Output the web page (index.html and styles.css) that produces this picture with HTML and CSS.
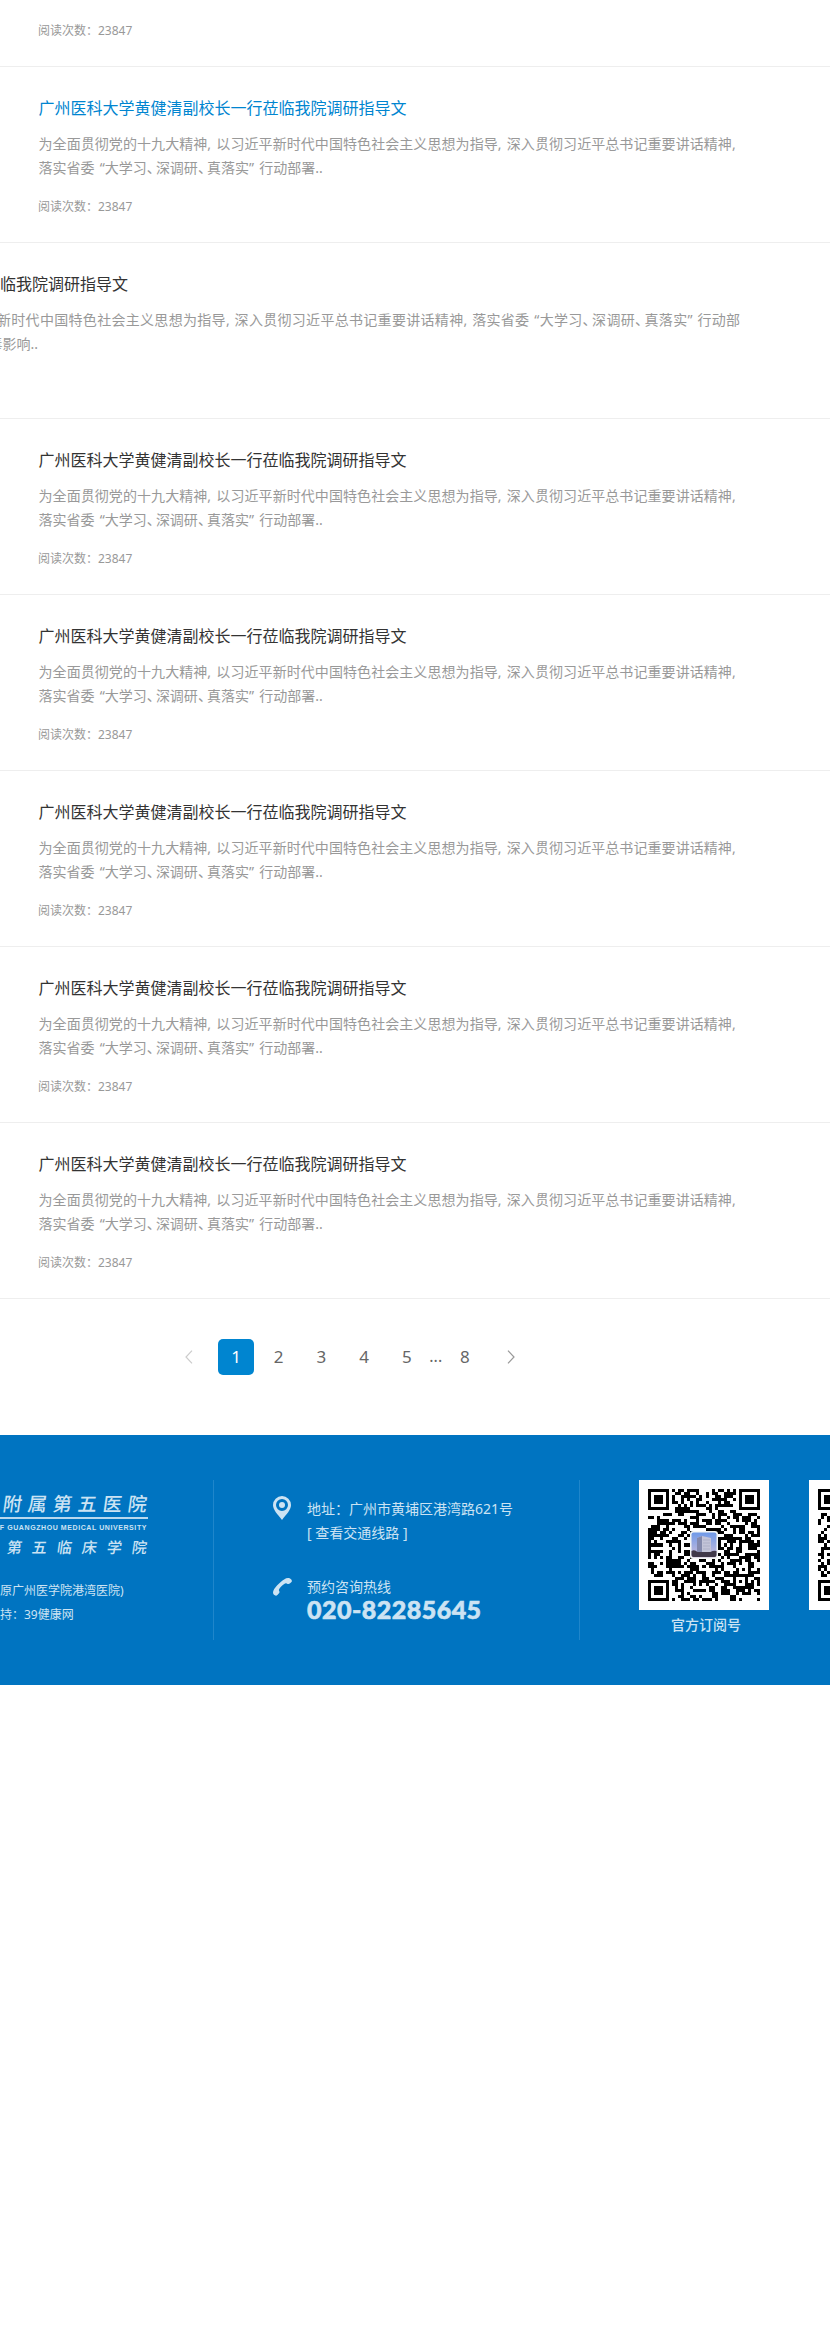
FILE: index.html
```html
<!DOCTYPE html>
<html lang="zh-CN">
<head>
<meta charset="utf-8">
<title>医院新闻</title>
<link rel="stylesheet" href="styles.css">
</head>
<body>
<main class="news" id="news">
  <article class="item item--first"><p class="reads">阅读次数&#xFF1A;23847</p></article>
</main>

<nav class="pager">
  <a class="pager__arrow pager__arrow--off"><svg width="8" height="14" viewBox="0 0 8 14"><path d="M7 .7 1 7l6 6.300"/></svg></a>
  <a class="pager__page pager__page--on">1</a>
  <a class="pager__page">2</a>
  <a class="pager__page">3</a>
  <a class="pager__page">4</a>
  <a class="pager__page">5</a>
  <span class="pager__dots">...</span>
  <a class="pager__page">8</a>
  <a class="pager__arrow"><svg width="8" height="14" viewBox="0 0 8 14"><path d="m1 .7 6 6.300-6 6.300"/></svg></a>
</nav>

<footer class="footer">
  <section class="brand">
    <div class="brand__name"><span>附</span><span>属</span><span>第</span><span>五</span><span>医</span><span>院</span></div>
    <div class="brand__en">F GUANGZHOU MEDICAL UNIVERSITY</div>
    <div class="brand__sub"><span>第</span><span>五</span><span>临</span><span>床</span><span>学</span><span>院</span></div>
    <p class="brand__old">原广州医学院港湾医院)</p>
    <p class="brand__tech">持&#xFF1A;39健康网</p>
  </section>
  <section class="contact">
    <div class="contact__row">
      <svg class="contact__pin" width="18" height="24" viewBox="0 0 18 24"><path fill-rule="evenodd" d="M9 0a9 9 0 0 1 9 9c0 5-4.500 9-9 15C4.500 18 0 14 0 9a9 9 0 0 1 9-9Zm0 3a6 6 0 1 0 0 12A6 6 0 0 0 9 3Z"/><circle cx="9" cy="9" r="3"/></svg>
      <div class="contact__text">地址&#xFF1A;广州市黄埔区港湾路621号<br>[ 查看交通线路 ]</div>
    </div>
    <div class="contact__row contact__row--tel">
      <svg class="contact__phone" width="19" height="18" viewBox="0 0 19 18"><path d="M11.500 1.200C13 0 15.500-.3 17 .5c1 .5 1.800 1.600 1.900 2.600.1.700-2.700 3-3.700 3-.9 0-1.300-1-2.200-.9-2.500.5-6.500 4.600-7.100 6.600-.2 1 .8 1.500.6 2.500-.2 1-2.700 3.700-3.600 3.500C1.500 17.400 0 16.300 0 14.500 0 10.500 7.500 3.500 11.500 1.200Z"/></svg>
      <div class="contact__text"><div class="contact__label">预约咨询热线</div><div class="contact__tel">020-82285645</div></div>
    </div>
  </section>
  <section class="codes">
    <figure class="code"><svg class="code__qr" data-seed="7" width="130" height="130" viewBox="0 0 130 130"></svg><figcaption>官方订阅号</figcaption></figure>
    <figure class="code"><svg class="code__qr" data-seed="31" width="130" height="130" viewBox="0 0 130 130"></svg></figure>
  </section>
</footer>
<script src="main.js"></script>
</body>
</html>
```
FILE: styles.css
```css
* { box-sizing: border-box; }
body, p, h2, figure { margin: 0; }
body {
  background: #fff;
  color: #333;
  font-family: "Noto Sans", "Noto Sans CJK SC", sans-serif;
  overflow-x: hidden;
}
.news { overflow: hidden; }
.item {
  height: 176px;
  padding: 29px 0 0 38.500px;
  border-bottom: 1px solid #eee;
}
.item--first { height: 67px; padding-top: 22px; }
.item h2 { font-size: 16px; line-height: 24px; font-weight: 400; white-space: nowrap; }
.item--active h2 { color: #0085d0; }
.item__text {
  margin-top: 12px;
  color: #999;
  font-size: 14px;
  line-height: 24px;
  white-space: nowrap;
  word-spacing: 1.500px;
}
.item__text--lead { letter-spacing: .07px; }
.mark { letter-spacing: -4.800px; }
.reads { margin: 18px 0 0 -.5px; color: #999; font-size: 12px; line-height: 18px; }
.item--first .reads { margin-top: 0; }
.item--wide { padding-left: 0; }
.item--wide .line { display: block; width: 743px; margin-left: -3px; white-space: normal; text-align: justify; text-align-last: justify; word-spacing: 1px; }
.item--wide .line--end { width: 50px; margin-left: -12px; text-align: right; text-align-last: right; white-space: nowrap; }

.pager { display: flex; align-items: center; height: 136px; padding: 0 0 20px 171px; }
.pager__arrow { width: 36px; display: flex; justify-content: center; margin-right: 11px; }
.pager__arrow svg { fill: none; stroke: #999; stroke-width: 1.200; }
.pager__arrow--off svg { stroke: #ccc; }
.pager__page {
  width: 36px; height: 36px; margin-right: 6.700px;
  border-radius: 5px; color: #666;
  font-size: 17px; line-height: 35px; text-align: center;
}
.pager__page--on { background: #0085d0; color: #fff; }
.pager__dots { width: 22px; margin: 0 0 2px -6.700px; text-align: center; color: #666; font-size: 16px; }
.pager__dots + .pager__page { margin-right: 10px; }

.footer { display: flex; height: 250px; padding-top: 45px; background: #0074c1; color: #cce3f3; overflow: hidden; }
.brand { width: 214px; height: 160px; border-right: 1px solid #1f86cb; flex: none; overflow: hidden; }
.brand__name, .brand__sub { display: flex; width: 147px; justify-content: space-between; font-weight: 500; }
.brand__name span, .brand__sub span { transform: skewX(-8deg); }
.brand__name { padding: 12px 0 0 3px; font-size: 19px; line-height: 24px; }
.brand__en {
  display: flex; justify-content: flex-end; width: 148px; margin-top: 1px; padding: 4px 1px 0 0;
  border-top: 2px solid #b8d8ee;
  font: bold 7px/9px "Liberation Sans", sans-serif; letter-spacing: .580px; white-space: nowrap;
}
.brand__sub { padding: 4px 0 0 7px; font-size: 15px; line-height: 22px; }
.brand__old, .brand__tech { font-size: 12px; line-height: 24px; white-space: nowrap; }
.brand__old { margin-top: 21px; }
.contact { width: 366px; height: 160px; flex: none; padding: 16px 0 0 59px; border-right: 1px solid #1f86cb; }
.contact svg { fill: currentColor; flex: none; }
.contact__row { display: flex; gap: 16px; font-size: 14px; line-height: 24px; }
.contact__row .contact__text { padding-top: 1px; }
.contact__row--tel { margin-top: 33px; gap: 15px; }
.contact__row--tel .contact__text { padding-top: 0; margin-top: -3px; }
.contact__tel { margin-top: -2px; font: 900 25px/24px Lato, sans-serif; letter-spacing: .480px; -webkit-text-stroke: .6px currentColor; }
.codes { display: flex; flex: none; gap: 40px; padding-left: 59px; }
.code { width: 130px; }
.code__qr { display: block; background: #fff; }
.code figcaption { width: 134px; text-align: center; font-size: 14px; line-height: 29px; font-weight: 500; }
```
FILE: main.js
```js
const news = document.getElementById('news');
const m = '<span class="mark">、</span>';
const tail = '新时代中国特色社会主义思想为指导, 深入贯彻习近平总书记重要讲话精神,';
const study = `落实省委 “大学习${m}深调研${m}真落实” 行动部`;
for (let i = 0; i < 7; i++) {
  const wide = i === 1;
  const kind = i === 0 ? ' item--active' : wide ? ' item--wide' : '';
  const title = (wide ? '' : '广州医科大学黄健清副校长一行莅') + '临我院调研指导文';
  const text = wide
    ? `<span class="line">${tail} ${study}</span><span class="line line--end">毒影响..</span>`
    : `<span class="item__text--lead">为全面贯彻党的十九大精神, 以习近平${tail}</span><br>${study}署..`;
  news.insertAdjacentHTML('beforeend',
    `<article class="item${kind}"><h2>${title}</h2><p class="item__text">${text}</p>${wide ? '' : '<p class="reads">阅读次数\uFF1A23847</p>'}</article>`);
}

// QR symbols: 37 x 37 modules, three finder squares, one alignment square
const N = 37, U = 112 / N;
function square(c, r, cx, cy, half) {
  const d = Math.max(Math.abs(c - cx), Math.abs(r - cy));
  return d > half ? null : half === 4 ? d !== 2 && d !== 4 : d !== 1;
}
document.querySelectorAll('.code__qr').forEach(svg => {
  let s = +svg.dataset.seed, d = '';
  const next = () => (s = (s * 1103515245 + 12345) % 2147483648) / 2147483648;
  for (let r = 0; r < N; r++) for (let c = 0; c < N; c++) {
    let on = next() < .52;
    for (const [x, y, h] of [[3, 3, 4], [33, 3, 4], [3, 33, 4], [30, 30, 2]]) {
      const v = square(c, r, x, y, h);
      if (v !== null) on = v;
    }
    if (on) d += `M${c} ${r}h1v1h-1z`;
  }
  svg.innerHTML = `<g shape-rendering="crispEdges"><path transform="translate(9 9) scale(${U})" d="${d}"/></g>
    <defs><linearGradient id="sky" x2="0" y2="1"><stop stop-color="#6f9ae8"/><stop offset="1" stop-color="#cdbedb"/></linearGradient></defs>
    <rect x="51" y="51" width="28" height="28" rx="3" fill="#f5f7f5"/>
    <rect x="52.500" y="52.500" width="25" height="25" rx="2" fill="url(#sky)"/>
    <path d="M58 58l5-2 9 2v16H58z" fill="#c3c4d8"/><path d="M58 58l5-2v18h-5z" fill="#8389ac"/>
    <path d="M64 60h7M64 63h7M64 66h7M64 69h7" stroke="#a5a9c2" stroke-width=".7"/>
    <path d="M52.500 71q3-2 6 1h13q3-2 6-1v4q0 2-2 2h-21q-2 0-2-2z" fill="#41394a"/>`;
});
```
